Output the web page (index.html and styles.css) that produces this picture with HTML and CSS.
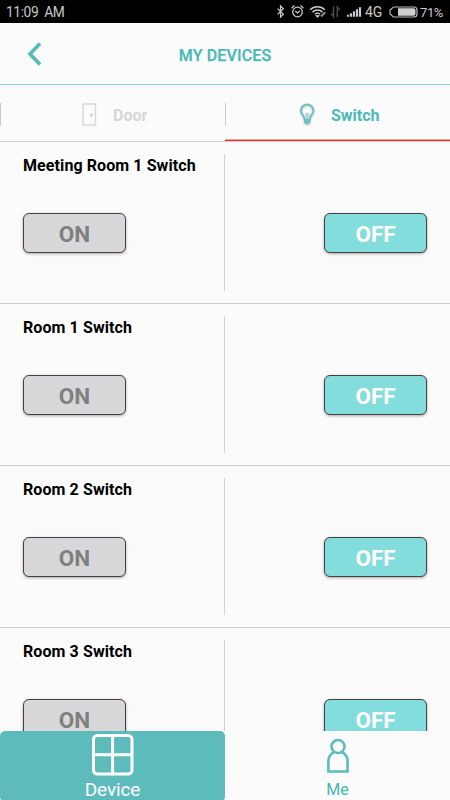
FILE: index.html
```html
<!DOCTYPE html>
<html lang="en">
<head>
<meta charset="utf-8">
<title>My Devices</title>
<link rel="stylesheet" href="styles.css">
</head>
<body>
<div class="app">
  <div class="status">
    <span class="clock">11:09&nbsp; AM</span>
    <svg class="status-icons" width="88" height="23" viewBox="0 0 88 23" fill="none" stroke="#c9c9c9">
      <path d="M2.6 8.600 8.400 14.200 5.500 17V6l2.900 2.800-5.800 5.600" stroke-width="1.200"/>
      <circle cx="22.500" cy="12" r="4.800" stroke-width="1.300"/>
      <path d="M20.200 11l2.300 2 2.300-2M16.600 8.200l2.800-2.600M28.400 8.200l-2.800-2.600" stroke-width="1.300"/>
      <path d="M35.200 9.800c4-4 10.600-4 14.600 0M37.500 12.100c2.800-2.800 7.200-2.800 10 0M39.800 14.300c1.600-1.500 3.800-1.500 5.400 0" stroke-width="1.500"/>
      <path d="M40.700 15.600h3.600l-1.800 1.800z" fill="#c9c9c9" stroke-width=".8"/>
      <path d="M46 16.500l4.200-4.200" stroke="#8a8a8a" stroke-width="2"/>
      <path d="M58.500 6.500v10l-2.500-3M62.300 17V7l2.700 3" stroke="#4b4b4b" stroke-width="1.500"/>
      <path d="M73 16.800v-2M76 16.800v-3.600M79 16.800v-5.600M82 16.800V9.200M85 16.800V7.200" stroke-width="2.200"/>
    </svg>
    <span class="network">4G</span>
    <svg class="battery" width="29" height="12" viewBox="0 0 29 12">
      <path d="M5 1h20a3 3 0 0 1 3 3v4a3 3 0 0 1-3 3H5C3 11 3 8.500 1 8V4c2-.5 2-3 4-3z" fill="none" stroke="#bdbdbd" stroke-width="1.200"/>
      <path d="M9 2.300h15.500a2 2 0 0 1 2 2v3.400a2 2 0 0 1-2 2H9z" fill="#d0d0d0"/>
    </svg>
    <span class="percent">71%</span>
  </div>

  <header class="header">
    <svg class="back" width="16" height="24" viewBox="0 0 16 24"><path d="M13 1.500 3 12l10 10.500" fill="none" stroke="#57bbb9" stroke-width="3.600"/></svg>
    <h1>MY DEVICES</h1>
  </header>

  <nav class="tabs">
    <div class="tab door">
      <svg width="15" height="23" viewBox="0 0 15 23"><path d="M1 1h12.500v21H1z" fill="none" stroke="#d3dadf" stroke-width="1.500"/><circle cx="9.500" cy="12" r="1.600" fill="#c9d1d6"/></svg>
      <span>Door</span>
    </div>
    <div class="tab switch">
      <svg width="19" height="24" viewBox="0 0 19 24">
        <path d="M6.800 17C6.600 12.500 3 11.500 3 7.700a6.200 6.200 0 0 1 12.400 0C15.400 11.500 11.800 12.500 11.600 17" fill="none" stroke="#68c3c1" stroke-width="2"/>
        <path d="M6.800 9.500 8.600 15h1.200l1.800-5.500-1.200 1.200-1.200-1.200L8 10.700z" fill="#a5d9d7"/>
        <path d="M6 15.500h6.400v3.800l-1.700 1.900h-3L6 19.300z" fill="#68c3c1"/>
      </svg>
      <span>Switch</span>
    </div>
  </nav>

  <main class="list">
    <section class="row">
      <div class="cell"><h2>Meeting Room 1 Switch</h2><button class="btn on">ON</button></div>
      <div class="cell right"><button class="btn off">OFF</button></div>
    </section>
    <section class="row">
      <div class="cell"><h2>Room 1 Switch</h2><button class="btn on">ON</button></div>
      <div class="cell right"><button class="btn off">OFF</button></div>
    </section>
    <section class="row">
      <div class="cell"><h2>Room 2 Switch</h2><button class="btn on">ON</button></div>
      <div class="cell right"><button class="btn off">OFF</button></div>
    </section>
    <section class="row">
      <div class="cell"><h2>Room 3 Switch</h2><button class="btn on">ON</button></div>
      <div class="cell right"><button class="btn off">OFF</button></div>
    </section>
  </main>

  <footer class="bottom">
    <div class="item active">
      <svg width="42" height="42" viewBox="0 0 42 42" fill="none" stroke="#fff" stroke-width="3"><rect x="1.500" y="1.500" width="38.500" height="38.500" rx="4"/><path d="M20.600 2v38M2 20.700h38"/></svg>
      <span>Device</span>
    </div>
    <div class="item me">
      <svg width="24" height="36" viewBox="0 0 24 36" fill="none" stroke="#5dbcbb" stroke-width="2.600"><circle cx="12" cy="8.500" r="6.500"/><path d="M8 14.200C4.500 16 2.400 19.500 2.400 23.500v10h19.200v-10c0-4-2.100-7.500-5.600-9.300"/></svg>
      <span>Me</span>
    </div>
  </footer>
</div>
</body>
</html>
```
FILE: styles.css
```css
* { box-sizing: border-box; }
body { margin: 0; font-family: Roboto, "Liberation Sans", sans-serif; background: #fbfbfb; }
h1, h2 { margin: 0; }
svg { display: block; flex: none; }
.app { width: 450px; height: 800px; display: flex; flex-direction: column; overflow: hidden; }

.status { height: 23px; flex: none; display: flex; align-items: center; background: #000; color: #c9c9c9; font-size: 13.5px; line-height: 23px; padding-left: 6px; white-space: nowrap; }
.clock { width: 269px; letter-spacing: -.43px; padding-top: 1px; font-size: 13.8px; }
.network { width: 22px; margin-left: 2px; padding-top: 1px; font-size: 14px; }
.battery { margin-left: 2px; }
.percent { margin-left: 2px; padding-top: 1px; font-size: 13px; letter-spacing: -.4px; }

.header { height: 62px; flex: none; display: grid; grid-template-columns: 60px 1fr 60px; align-items: center; border-bottom: 1px solid #8fcfcd; }
.back { margin: 1px 0 0 26.5px; }
.header h1 { text-align: center; font-size: 16px; font-weight: 500; line-height: 20px; padding-top: 4px; letter-spacing: .15px; color: #48b9b6; -webkit-text-stroke: .25px #48b9b6; }

.tabs { height: 57px; flex: none; display: grid; grid-template-columns: 225px 225px; border-bottom: 1px solid #cfcfd1; }
.tab { height: 56px; display: flex; align-items: center; font-size: 16px; font-weight: 700; background: linear-gradient(#c9c9ca, #c9c9ca) 0 18px / 1px 23px no-repeat; }
.tab span { padding-top: 5px; line-height: 20px; }
.door { padding-left: 82px; gap: 16px; color: #d6d6d8; }
.door svg { margin-top: 3px; }
.switch { padding-left: 73px; gap: 14px; color: #4cb9b7; box-shadow: inset 0 -1px #e82f1f, inset 0 -2px #eba79f; }
.switch svg { margin-top: 4px; filter: drop-shadow(0 1px 1px #0003); }

.list { flex: 1; min-height: 0; overflow: hidden; }
.row { height: 162px; display: grid; grid-template-columns: 225px 225px; border-bottom: 1px solid #cdcdcf; }
.cell { padding: 14px 23px 0; background: linear-gradient(#d2d2d4, #d2d2d4) 224px 12px / 1px 137px no-repeat; }
.cell h2 { height: 20px; line-height: 20px; font-size: 16px; font-weight: 700; letter-spacing: .09px; white-space: nowrap; color: #000; }
.cell .btn { display: block; margin-top: 37px; }
.cell.right { display: flex; justify-content: flex-end; padding-top: 34px; background: none; }
.btn { width: 103px; height: 40px; padding: 2px 0 0; border: 1px solid #464042; border-radius: 6px; font: 700 22.5px/36px Roboto, sans-serif; text-align: center; box-shadow: 0 1px 3px #0005; }
.on { background: #d8d8da; color: #808080; }
.off { background: #83dddc; color: #fff; }

.bottom { height: 69px; flex: none; display: grid; grid-template-columns: 225px 225px; background: #fbfbfb; }
.item { display: flex; flex-direction: column; align-items: center; }
.active { background: #5dbcbb; border-radius: 5px; color: #fff; padding-top: 3px; font-size: 19px; line-height: 24px; }
.active span { margin-top: 2px; letter-spacing: -.1px; }
.me { color: #48b5b3; padding-top: 7px; font-size: 16px; line-height: 20px; }
.me span { margin-top: 6px; }
```
